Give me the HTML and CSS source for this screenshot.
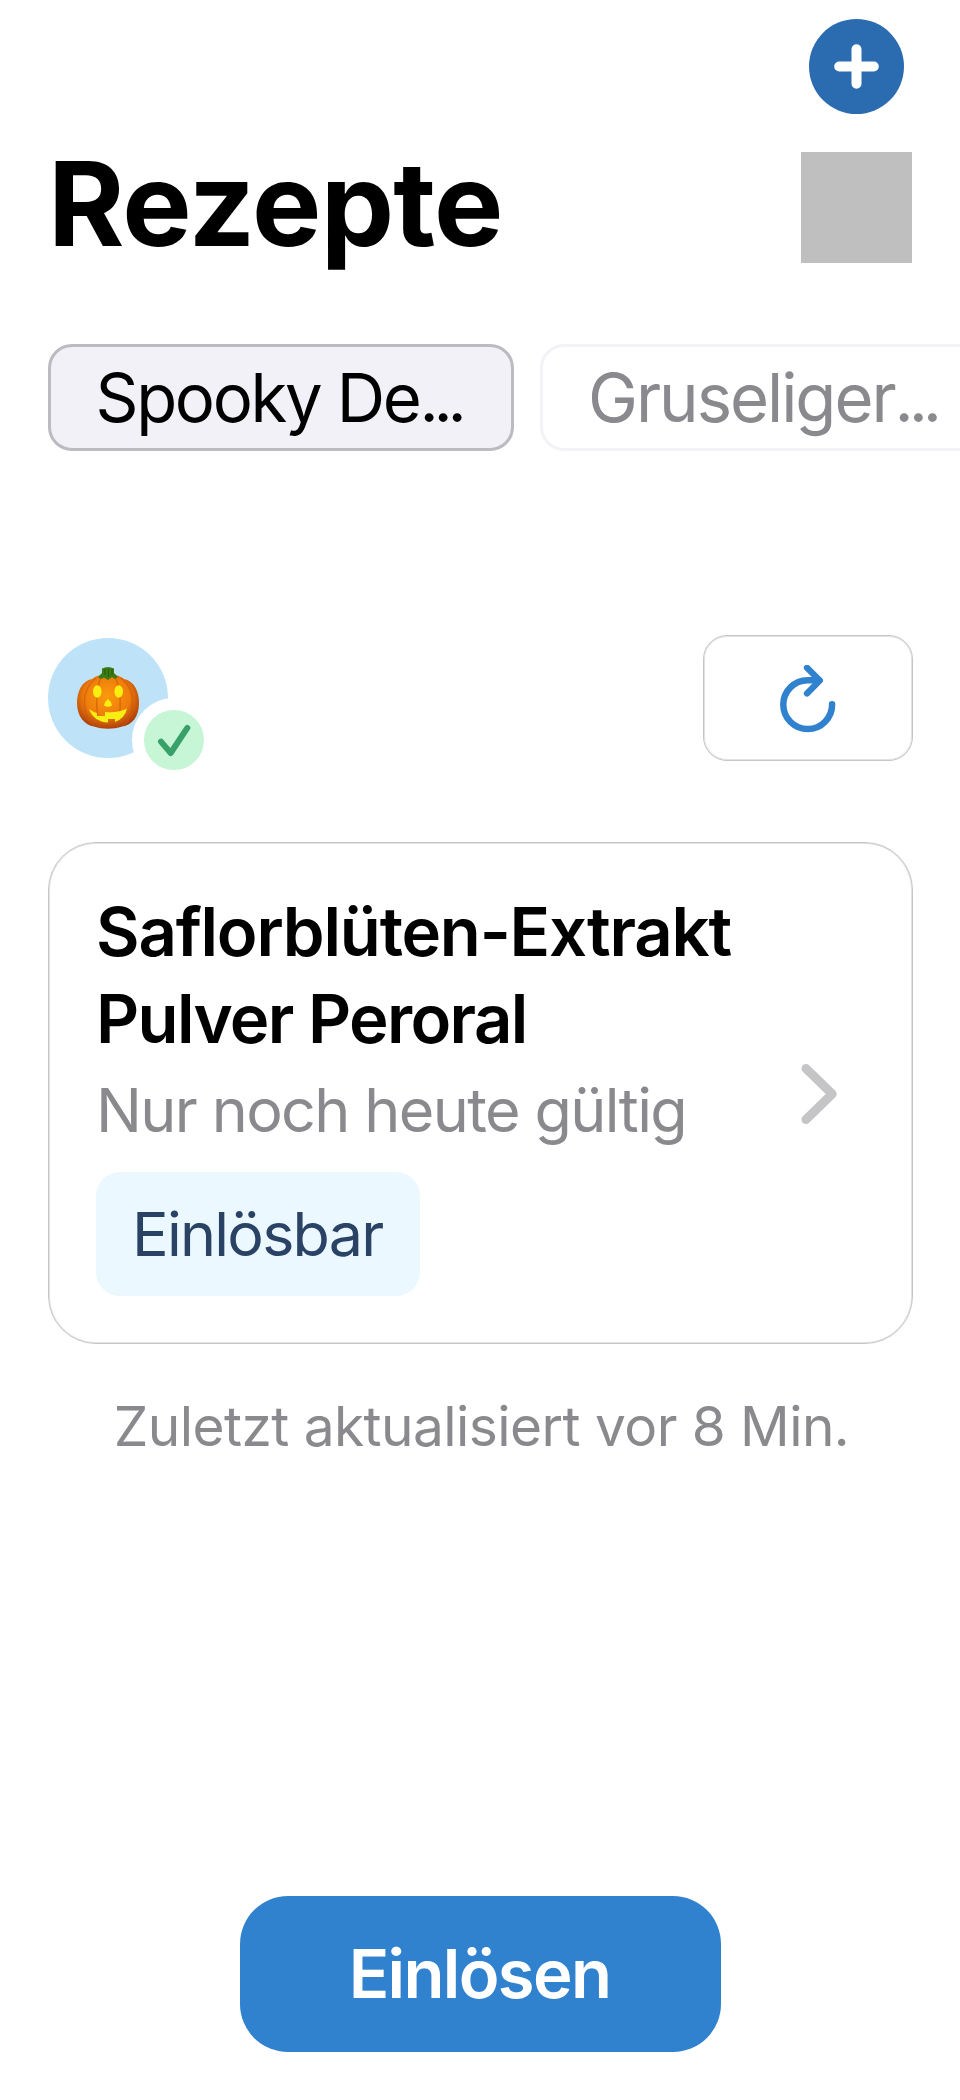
FILE: index.html
```html
<!DOCTYPE html>
<html lang="de">
<head>
<meta charset="utf-8">
<title>Rezepte</title>
<link rel="stylesheet" href="styles.css">
</head>
<body>
<main class="screen">
  <div class="toolbar">
    <button class="add" aria-label="Hinzufügen">
      <svg width="95" height="95" viewBox="0 0 95 95"><path d="M30.2 47.5h34.6M47.5 30.2v34.6" stroke="#fff" stroke-width="10" stroke-linecap="round"/></svg>
    </button>
  </div>
  <header class="heading">
    <h1 class="title">Rezepte</h1>
    <div class="thumb"></div>
  </header>
  <nav class="chips">
    <button class="chip chip-active">Spooky De<span class="dots">...</span></button>
    <button class="chip chip-second">Gruseliger<span class="dots">...</span></button>
  </nav>
  <section class="status">
    <div class="avatar">
      <svg class="pumpkin" width="62" height="62" viewBox="0 0 62 62">
        <defs>
          <radialGradient id="skin" cx=".48" cy=".4" r=".62">
            <stop offset="0" stop-color="#fb9a0c"/><stop offset=".6" stop-color="#ee7c0c"/><stop offset="1" stop-color="#a83a0c"/>
          </radialGradient>
        </defs>
        <path d="M31 9C24 7 19 9 15 12C5 14 0 24 0 36C0 50 8 58 17 59.500C26 62.500 36 62.500 45 59.500C55 58 62 50 62 36C62 24 57 14 47 12C42 8 36 7 31 9Z" fill="url(#skin)"/>
        <path d="M19 11C10 18 6 29 8 40C9 48 12 55 17 59M24 10C19 22 18 42 23 60M38 10C44 22 45 42 40 60M44 11C53 18 57 29 55 40C54 48 51 55 46 59" fill="none" stroke="#cc560c" stroke-width="1.500" opacity=".6"/>
        <path d="M21 10L25 6V1.500Q31-1.500 37 1.500V6L41 10L38 12L35 10L31 13L27 10.500L24 12Z" fill="#3c7a14"/>
        <path d="M28 2v6M31.500 2v8M35 2v6" stroke="#275c0c" fill="none"/>
        <g fill="#f8ee12">
          <ellipse cx="20.300" cy="24.500" rx="4.300" ry="6.200"/><ellipse cx="41.700" cy="24.500" rx="4.300" ry="6.200"/>
          <path d="M31 32Q34 34 35 38.500Q31 41 27 38.500Q28 34 31 32Z"/>
          <path d="M12 42Q16 45 20 46V49H28V45Q42 46 50 41.500Q48 51 38 55V52H31V55.500Q17 55 12 42Z"/>
        </g>
      </svg>
      <span class="badge">
        <svg width="60" height="60" viewBox="0 0 60 60"><path d="M17 31.600L26.700 43L43.300 17.900" fill="none" stroke="#38a169" stroke-width="6" stroke-linecap="round" stroke-linejoin="round"/></svg>
      </span>
    </div>
    <button class="refresh" aria-label="Aktualisieren">
      <svg width="60" height="70" viewBox="0 0 60 70" fill="none" stroke="#3182ce" stroke-width="6.500" stroke-linecap="round" stroke-linejoin="round"><path d="M54.100 39.300A24.400 24.400 0 1 1 29.700 15.200H41"/><path d="M29 2.800L41.800 15.600L29 28.400" stroke-width="6.300"/></svg>
    </button>
  </section>
  <article class="card">
    <div class="card-text">
      <h2 class="name"><span class="name-first">Saflorblüten-Extrakt</span><br><span class="name-rest">Pulver Peroral</span></h2>
      <p class="validity">Nur noch heute gültig</p>
      <span class="tag">Einlösbar</span>
    </div>
    <svg class="chevron" width="36" height="62" viewBox="0 0 36 62"><path d="M5 5.500L31.200 31L5 56.500" fill="none" stroke="#c5c5c7" stroke-width="9" stroke-linecap="round" stroke-linejoin="round"/></svg>
  </article>
  <p class="updated">Zuletzt aktualisiert vor 8 Min.</p>
  <button class="redeem">Einlösen</button>
</main>
</body>
</html>
```
FILE: styles.css
```css
* { box-sizing: border-box; margin: 0; padding: 0; }
body { background: #fff; font-family: Inter, "Liberation Sans", sans-serif; color: #000; }
button { font: inherit; border: 0; background: none; }
svg { display: block; }

.screen { width: 960px; height: 2100px; padding: 19px 0 48px; display: flex; flex-direction: column; overflow: hidden; }

.toolbar { display: flex; justify-content: flex-end; padding-right: 56px; }
.add { width: 95px; height: 95px; border-radius: 50%; background: #2b6cb0; }

.heading { display: flex; justify-content: space-between; align-items: flex-start; height: 111px; margin-top: 38px; padding: 0 48px; }
.title { font-size: 116.5px; font-weight: 700; line-height: 103px; letter-spacing: -0.82px; }
.thumb { width: 111px; height: 111px; background: #bfbfbf; }

.chips { display: flex; gap: 26px; margin-top: 81px; padding-left: 48px; }
.chip { flex: none; width: 466px; height: 107px; padding-left: 45px; border: 3px solid #f2f2f7; border-radius: 24px; font-size: 67px; line-height: 101px; text-align: left; white-space: nowrap; letter-spacing: -2.05px; color: #8a8a8e; }
.chip-active { padding-left: 44.5px; border-color: #bcbbc1; background: #f2f1f7; color: #000; letter-spacing: -2.35px; }
.dots { letter-spacing: -5.2px; }

.status { display: flex; justify-content: space-between; margin-top: 184px; padding: 0 47px 0 48px; }
.avatar { position: relative; width: 120px; height: 120px; margin-top: 3px; padding: 29px; border-radius: 50%; background: #bee3f8; }
.badge { position: absolute; left: 84px; top: 60px; width: 84px; height: 84px; border: 12px solid #fff; border-radius: 50%; background: #c6f6d5; }
.refresh { display: flex; align-items: center; justify-content: center; width: 210px; height: 126px; padding-top: 4px; border: 1px solid #c6c6c6; border-radius: 24px; box-shadow: inset 0 0 0 1px #e2e2e2; }

.card { display: flex; justify-content: space-between; align-items: center; height: 502px; margin: 81px 47px 0 48px; padding: 0 75px 0 47px; border: 1px solid #c6c6c6; border-radius: 48px; box-shadow: inset 0 0 0 1px #e2e2e2; }
.card-text { align-self: flex-start; padding-top: 45px; }
.chevron { margin-top: 1px; }
.name { font-size: 67px; font-weight: 600; line-height: 87px; white-space: nowrap; }
.name-first { letter-spacing: -1.2px; }
.name-rest { letter-spacing: -1.65px; }
.validity { margin-top: 8px; font-size: 61px; line-height: 80px; letter-spacing: -1.61px; color: #8a8a8e; }
.tag { display: block; width: 324px; margin-top: 22px; padding-left: 36px; border-radius: 24px; background: #ebf8ff; color: #2a4365; font-size: 61px; line-height: 124px; letter-spacing: -1.74px; }
.updated { margin-top: 49px; padding-left: 3px; font-size: 55px; line-height: 66px; letter-spacing: -0.56px; text-align: center; white-space: nowrap; color: #8a8a8e; }

.redeem { width: 481px; height: 156px; margin: auto auto 0 240px; border-radius: 48px; padding: 0 2px 2px 0; background: #3182ce; color: #fff; font-size: 67px; font-weight: 600; letter-spacing: -1.65px; }
```
